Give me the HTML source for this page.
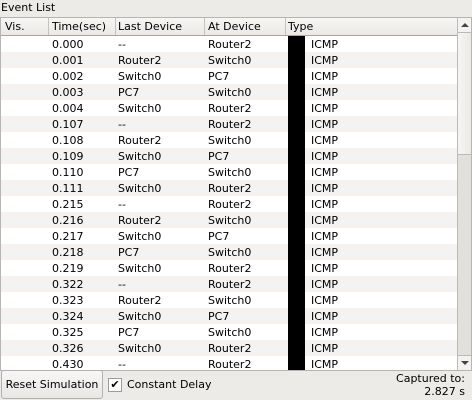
<!DOCTYPE html><html><head><style>
body{margin:0;width:472px;height:400px;background:#edebe8;font-family:"DejaVu Sans",sans-serif;font-size:11px;color:#000;position:relative;overflow:hidden}
.a{position:absolute;white-space:nowrap}
#tb{position:absolute;left:0;top:17px;width:470px;height:352px;border:1px solid #b8b5b1;background:#fff;overflow:hidden}
.hd{position:absolute;left:0;top:0;width:456px;height:17px;background:linear-gradient(#f7f6f4,#ebe9e6);border-bottom:1px solid #a9a6a2}
.hd span{position:absolute;top:2px}
.hd i{position:absolute;top:0;width:1px;height:17px;background:#c6c3bf}
.r{position:absolute;left:0;width:456px;height:16px}
.r span{position:absolute;top:2px}
.r b{position:absolute;left:287px;top:0;width:17px;height:16px;background:#000}
.sb{position:absolute;left:456px;top:0;width:14px;height:352px;background:#e2e0dd;border-left:1px solid #bdbab6}
</style></head><body>
<div class="a" style="left:1px;top:1px">Event List</div>
<div id="tb">
<div class="hd"><span style="left:4px">Vis.</span><i style="left:47px"></i><span style="left:51px">Time(sec)</span><i style="left:114px"></i><span style="left:117px">Last Device</span><i style="left:203px"></i><span style="left:207px">At Device</span><i style="left:284px"></i><span style="left:287px">Type</span></div>
<div id="rows"></div>
<div class="sb">
<div style="position:absolute;left:0;top:0;width:14px;height:14px;background:#f3f2f0;border-bottom:1px solid #bdbab6"><div style="position:absolute;left:3px;top:5px;border-left:4px solid transparent;border-right:4px solid transparent;border-bottom:4px solid #444"></div></div>
<div style="position:absolute;left:0;top:15px;width:14px;height:121px;background:linear-gradient(90deg,#f6f5f3,#ebe9e6);border-bottom:1px solid #bdbab6"></div>
<div style="position:absolute;left:0;top:337px;width:14px;height:15px;background:#f3f2f0;border-top:1px solid #bdbab6"><div style="position:absolute;left:3px;top:5px;border-left:4px solid transparent;border-right:4px solid transparent;border-top:4px solid #444"></div></div>
</div>
</div>
<div class="a" style="left:1px;top:370px;width:100px;height:27px;border:1px solid #b3b0ac;border-radius:3px;background:linear-gradient(#f8f7f6,#e9e7e4);text-align:center;line-height:28px">Reset Simulation</div>
<div class="a" style="left:108px;top:378px;width:12px;height:12px;border:1px solid #9e9b97;background:#fff;font-size:11px;line-height:12px;text-align:center;font-weight:bold">✔</div>
<div class="a" style="left:127px;top:378px">Constant Delay</div>
<div class="a" style="right:7px;top:372px;text-align:right;line-height:13px">Captured to:<br>2.827 s</div>
<script>
var d=[["0.000","--","Router2"],["0.001","Router2","Switch0"],["0.002","Switch0","PC7"],["0.003","PC7","Switch0"],["0.004","Switch0","Router2"],["0.107","--","Router2"],["0.108","Router2","Switch0"],["0.109","Switch0","PC7"],["0.110","PC7","Switch0"],["0.111","Switch0","Router2"],["0.215","--","Router2"],["0.216","Router2","Switch0"],["0.217","Switch0","PC7"],["0.218","PC7","Switch0"],["0.219","Switch0","Router2"],["0.322","--","Router2"],["0.323","Router2","Switch0"],["0.324","Switch0","PC7"],["0.325","PC7","Switch0"],["0.326","Switch0","Router2"],["0.430","--","Router2"]];
var h="";d.forEach(function(r,i){h+='<div class="r" style="top:'+(18+i*16)+'px;background:'+(i%2?'#f4f3f1':'#fff')+'"><span style="left:51px">'+r[0]+'</span><span style="left:117px">'+r[1]+'</span><span style="left:207px">'+r[2]+'</span><b></b><span style="left:310px">ICMP</span></div>'});
document.getElementById("rows").innerHTML=h;
</script>
</body></html>
